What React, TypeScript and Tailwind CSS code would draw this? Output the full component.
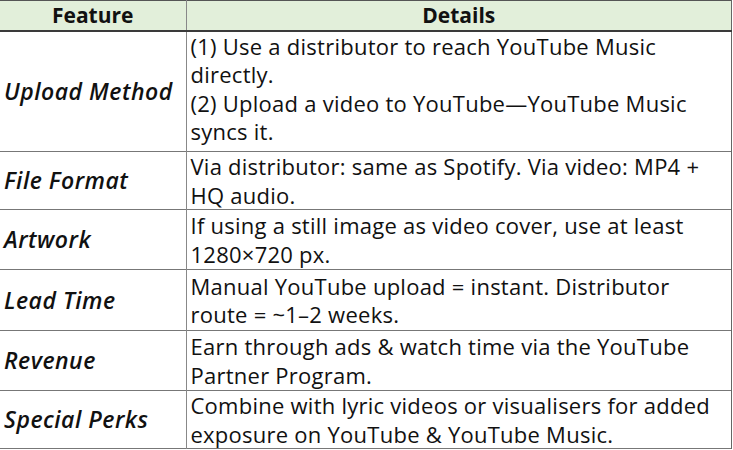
const rows: { feature: string; details: string[]; h: string }[] = [
  {
    feature: "Upload Method",
    h: "h-[121px]",
    details: [
      "(1) Use a distributor to reach YouTube Music directly.",
      "(2) Upload a video to YouTube—YouTube Music syncs it.",
    ],
  },
  {
    feature: "File Format",
    h: "h-[57px]",
    details: ["Via distributor: same as Spotify. Via video: MP4 + HQ audio."],
  },
  {
    feature: "Artwork",
    h: "h-[60px]",
    details: ["If using a still image as video cover, use at least 1280×720 px."],
  },
  {
    feature: "Lead Time",
    h: "h-[61px]",
    details: ["Manual YouTube upload = instant. Distributor route = ~1–2 weeks."],
  },
  {
    feature: "Revenue",
    h: "h-[60px]",
    details: ["Earn through ads & watch time via the YouTube Partner Program."],
  },
  {
    feature: "Special Perks",
    h: "h-[58px]",
    details: [
      "Combine with lyric videos or visualisers for added exposure on YouTube & YouTube Music.",
    ],
  },
];

export default function App() {
  return (
    <main className="w-[733px] h-[450px] bg-white font-['Open_Sans',sans-serif] text-[22px] text-[#111]">
      <table className="w-[732px] table-fixed border-collapse">
        <colgroup>
          <col className="w-[186px]" />
          <col />
        </colgroup>
        <thead>
          {/* HEADER */}
          <tr className="bg-[#e2efda] border-t border-[#555] border-b-2 border-b-[#3a3a3a]">
            <th className="h-[30px] border-r border-[#888] text-[21px] font-bold leading-[28px]">Feature</th>
            <th className="border-r border-[#666] text-[21px] font-bold leading-[28px]">Details</th>
          </tr>
        </thead>
        <tbody>
          {rows.map((row, i) => (
            <tr key={i} className={`${row.h} border-b border-[#777]`}>
              <td className="border-r border-[#888] pl-[4px] align-middle text-[23px] italic font-semibold tracking-[0.5px]">
                {row.feature}
              </td>
              <td
                className={`border-r border-[#666] pl-[4px] pr-1 align-middle leading-[28.5px] tracking-[0.25px] ${
                  i === 0 ? "pb-[5px]" : ""
                }`}
              >
                {row.details.map((d, j) => (
                  <p key={j}>{d}</p>
                ))}
              </td>
            </tr>
          ))}
        </tbody>
      </table>
    </main>
  );
}
